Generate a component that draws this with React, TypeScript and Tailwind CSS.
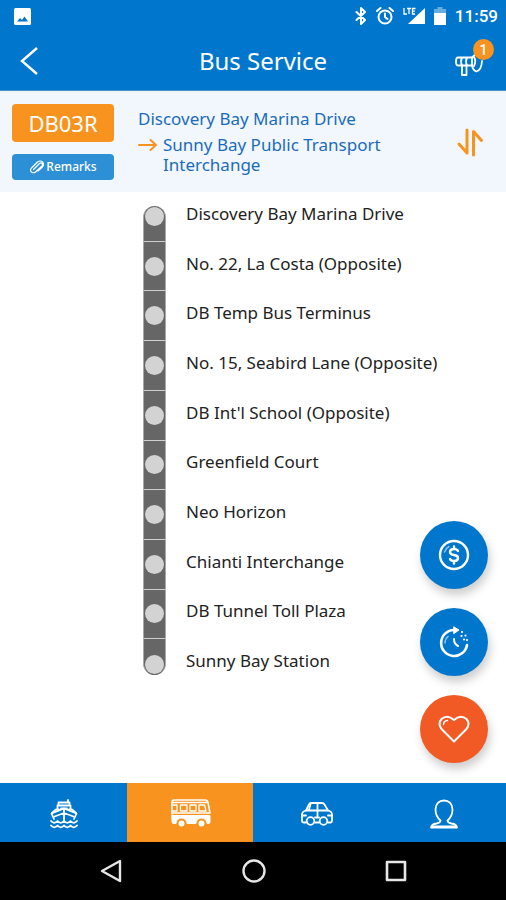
import { useState } from "react";
import type { ReactNode } from "react";
import clsx from "clsx";

const STOPS = [
  "Discovery Bay Marina Drive",
  "No. 22, La Costa (Opposite)",
  "DB Temp Bus Terminus",
  "No. 15, Seabird Lane (Opposite)",
  "DB Int'l School (Opposite)",
  "Greenfield Court",
  "Neo Horizon",
  "Chianti Interchange",
  "DB Tunnel Toll Plaza",
  "Sunny Bay Station",
];

type IconProps = {
  w: number;
  h: number;
  stroke?: number;
  className?: string;
  children: ReactNode;
};

function Icon({ w, h, stroke = 2, className, children }: IconProps) {
  return (
    <svg
      width={w}
      height={h}
      viewBox={`0 0 ${w} ${h}`}
      fill="none"
      stroke="currentColor"
      strokeWidth={stroke}
      strokeLinecap="round"
      strokeLinejoin="round"
      className={clsx("shrink-0", className)}
      aria-hidden="true"
    >
      {children}
    </svg>
  );
}

function FerryIcon() {
  return (
    <Icon w={28} h={30} stroke={1.8}>
      <path d="M8.5 6V3.500h11V6M18 3V1M7.500 12V6.500h13V12M11 9.500h6" />
      <path d="M4 20 1.500 14.500 14 9.500l12.500 5L24 20" />
      <path d="M2 14 6 10.500h3M26 14l-4-3.500h-3M4.500 17.500 14 14l9.500 3.500M14 10v12" />
      <path d="M1 22c2 2.400 4.500 2.400 6.500 0 2 2.400 4.500 2.400 6.500 0 2 2.400 4.500 2.400 6.500 0 2 2.400 4.500 2.400 6.500 0" />
      <path d="M1 26.500c2 2.400 4.500 2.400 6.500 0 2 2.400 4.500 2.400 6.500 0 2 2.400 4.500 2.400 6.500 0 2 2.400 4.500 2.400 6.500 0" />
    </Icon>
  );
}

function BusIcon() {
  return (
    <Icon w={40} h={29} stroke={1.6}>
      <path d="M1 15V3q0-2 2-2h31q2.500 0 3 2.500L39 14M1 3.500h36M1 14h38" />
      <path d="M2 6h4v6H2M9.500 6H16v6H9.500zM19 6h6v6h-6zM28 6h5.500L35 12h-7z" strokeWidth="1.300" />
      <path
        d="M1 16.500h38V23q0 1.500-1.500 1.500H36a5.500 5.500 0 0 0-11 0H16a5.500 5.500 0 0 0-11 0H2.500Q1 24.500 1 23Z"
        fill="currentColor"
        strokeWidth="1"
      />
      <circle cx="10.500" cy="24.500" r="2.200" fill="currentColor" />
      <circle cx="30.500" cy="24.500" r="2.200" fill="currentColor" />
    </Icon>
  );
}

function CarIcon() {
  return (
    <Icon w={32} h={24} stroke={1.8}>
      <path d="M5 8.500 8 2.500Q8.500 1 10 1h11q1.500 0 2.500 1.500l3.500 6" />
      <path d="M5 8.500h22q4 1 4 4V19q0 1.500-1.500 1.500H27M5 8.500q-4 1-4 4V19q0 1.500 1.500 1.500H5" />
      <path d="M16.500 1v13M9.500 2 8 8M14 20.500h4M1 13.500h4M31 13.500h-4M14 15.500h4" />
      <circle cx="9.500" cy="19" r="3.800" />
      <circle cx="22.500" cy="19" r="3.800" />
    </Icon>
  );
}

function ProfileIcon() {
  return (
    <Icon w={30} h={30} stroke={1.8}>
      <path d="M11.500 21.500C8.500 19 6.500 15 6.500 10.500 6.500 5 10 1.500 15 1.500s8.500 3.500 8.500 9c0 4.500-2 8.500-5 11 0 2 1.500 2.500 4 3 3.500.500 5 1.500 5.500 4H2c.500-2.500 2-3.500 5.500-4 2.500-.500 4-1 4-3Z" />
      <path d="M3 27.500h24" />
    </Icon>
  );
}

const TABS = [
  { id: "ferry", label: "Ferry", icon: <FerryIcon /> },
  { id: "bus", label: "Bus", icon: <BusIcon /> },
  { id: "car", label: "Car", icon: <CarIcon /> },
  { id: "profile", label: "Profile", icon: <ProfileIcon /> },
];

function StatusBar() {
  return (
    <div className="flex h-8 items-center justify-between pr-2 pl-[14px] text-white">
      <svg width="17" height="17" viewBox="0 0 17 17" aria-hidden="true">
        <rect width="17" height="17" rx="1.500" fill="currentColor" />
        <path d="M3 13.500 6 10l2 2 2.500-3.500L14 13.500Z" fill="#0077cc" />
      </svg>
      <div className="flex items-center gap-[9px]">
        <Icon w={12} h={18} stroke={2}>
          <path d="m1.500 5 8.500 8-4 4V1l4 4-8.500 8" />
        </Icon>
        <Icon w={18} h={18}>
          <circle cx="9" cy="10" r="6.500" />
          <path d="M9 6.500V10l2.500 2M1 4l3.500-3M17 4l-3.500-3" />
        </Icon>
        <svg width="22" height="18" viewBox="0 0 22 18" aria-hidden="true">
          <path d="M22 1v16H5Z" fill="currentColor" />
          <path
            d="M1 1v6h3M4 1.500h4M6 1.500V7M12.500 1.500H9.500V7h2.500M9.500 4.200h2.500"
            fill="none"
            stroke="currentColor"
            strokeWidth="1.300"
          />
        </svg>
        <svg width="12" height="18" viewBox="0 0 12 18" aria-hidden="true">
          <path d="M3.500 0h5v2H12v5H0V2h3.500Z" fill="currentColor" opacity="0.4" />
          <path d="M0 6h12v12H0Z" fill="currentColor" />
        </svg>
        <span className="font-[Roboto] text-[17px] leading-5 font-medium">11:59</span>
      </div>
    </div>
  );
}

function Header() {
  return (
    <header className="grid h-[59px] grid-cols-[1fr_auto_1fr] items-center border-b border-[#4a8fd6] pl-5 text-white">
      <button type="button" aria-label="Back" className="w-5 justify-self-start">
        <Icon w={20} h={28} stroke={2.400}>
          <path d="M17 1 2 14l15 13" strokeLinecap="butt" strokeLinejoin="miter" />
        </Icon>
      </button>
      <h1 className="text-2xl">Bus Service</h1>
      <button type="button" aria-label="Announcements" className="relative mr-3 h-9 w-10 justify-self-end">
        <Icon w={30} h={26} stroke={1.800} className="mt-2">
          <path d="M4 5.500h14v8H4q-2 0-2-4t2-4ZM8 5.500q-2 4 0 8M13 5.500q-2 4 0 8" />
          <path d="M8 13.500V23h4.500v-9.500" />
          <path d="M18 5.500 23 1M18 13.500q1 5 4.500 6 5-1.500 5.500-10.500M20 5q2.500 4 0 9" />
        </Icon>
        <span className="absolute -top-1 right-0 flex size-[21px] items-center justify-center rounded-full bg-[#f7931e] font-[Roboto] text-sm font-medium">
          1
        </span>
      </button>
    </header>
  );
}

function RouteSummary() {
  return (
    <section className="flex h-[101px] items-start bg-[#f2f7fd] pr-5 pl-3 text-[#1b6cba]">
      <div className="mt-[13px] flex w-[102px] shrink-0 flex-col gap-3">
        <div className="flex h-[38px] items-center justify-center rounded-sm bg-[#f7931e] text-[22px] text-white">
          DB03R
        </div>
        <button
          type="button"
          className="flex h-[26px] items-center justify-center gap-px rounded-sm bg-[#2d8fd5] text-xs font-medium text-white"
        >
          <Icon w={16} h={14} stroke={1.200}>
            <path d="m4.500 9.500 6-6q1.500-1.200 2.500 0t0 2.500l-6.500 6q-2 1.500-4 0t0-4L8.500 2q3-2 5 0t0 5L9 11" />
          </Icon>
          Remarks
        </button>
      </div>
      <div className="mt-[18px] ml-6 flex flex-1 flex-col gap-[6px] text-[17px] leading-5">
        <p>Discovery Bay Marina Drive</p>
        <div className="flex gap-[6px]">
          <Icon w={19} h={20} className="text-[#f7931e]">
            <path d="M1 10h17M12.500 5l5.500 5-5.500 5" />
          </Icon>
          <p className="w-[230px]">Sunny Bay Public Transport Interchange</p>
        </div>
      </div>
      <button type="button" aria-label="Reverse direction" className="mt-9 text-[#f7931e]">
        <Icon w={32} h={30} stroke={3}>
          <path d="M13 3v23L5 17M19.500 28V4.500l8 9" />
        </Icon>
      </button>
    </section>
  );
}

function StopList() {
  return (
    <ol className="grid flex-1 auto-rows-fr">
      {STOPS.map((stop, i) => {
        const first = i === 0;
        const last = i === STOPS.length - 1;
        return (
          <li key={stop} className="flex gap-5 pl-[143px]">
            <div className={clsx("flex w-[23px] shrink-0", first && "pt-[14px]", last && "pb-[14px]")}>
              <div
                className={clsx(
                  "flex flex-1 justify-center border-x border-[#a8a8a8] bg-[#666]",
                  first && "items-start rounded-t-full pt-px",
                  last && "items-end rounded-b-full pb-px",
                  !first && !last && "items-center",
                  !last && "border-b border-b-[#d0d0d0]",
                )}
              >
                <span className="size-[19px] rounded-full bg-[#d3d3d3]" />
              </div>
            </div>
            <span className="self-center pb-[6px] text-[17px] leading-5 text-[#222]">{stop}</span>
          </li>
        );
      })}
    </ol>
  );
}

function FloatingActions() {
  const [saved, setSaved] = useState(false);
  const base = "flex size-[68px] items-center justify-center rounded-full text-white shadow-[2px_6px_10px_rgba(0,0,0,0.2)]";
  return (
    <div className="absolute right-[18px] bottom-5 flex flex-col gap-[19px]">
      <button type="button" aria-label="Fares" className={clsx(base, "bg-[#0077cc]")}>
        <Icon w={32} h={32}>
          <circle cx="16" cy="16" r="14" strokeWidth="2.400" />
          <path d="M6.500 13q1-3.500 4.500-5.500" stroke="#8cc4ef" strokeWidth="1.500" />
          <path d="M20 12q-1-2-4-2-4 0-4 3 0 2.500 4 3t4 3q0 3-4 3-3 0-4-2M16 7.500V10M16 22v2.500" strokeWidth="2.400" />
        </Icon>
      </button>
      <button type="button" aria-label="Timetable" className={clsx(base, "bg-[#0077cc]")}>
        <Icon w={32} h={32}>
          <path d="M16 4A13 13 0 1 0 29 19" strokeWidth="2.600" />
          <path d="m16 1 5 3-5 3.500Z" fill="currentColor" strokeWidth="1" />
          <path d="M24 6v.010M27.500 9.500v.010M29 14v.010M23.500 10v.010M26 13.500v.010" strokeWidth="2.200" />
          <path d="M16 13q0 5 4 7" />
          <path d="M7 17q0-4 3-6.500" stroke="#8cc4ef" strokeWidth="1.500" />
        </Icon>
      </button>
      <button
        type="button"
        aria-label="Favourite"
        aria-pressed={saved}
        onClick={() => setSaved(!saved)}
        className={clsx(base, "bg-[#f15a24]")}
      >
        <Icon w={32} h={28}>
          <path
            d="M16 26.500 3.500 14Q-.500 8.500 3.500 4 9.500-1 16 5q6.500-6 12.500-1 4 4.500 0 10Z"
            fill={saved ? "currentColor" : "none"}
          />
          <path d="M5.500 9.500q0-3.500 4-4" strokeWidth="1.500" />
        </Icon>
      </button>
    </div>
  );
}

function TabBar() {
  const [active, setActive] = useState("bus");
  return (
    <nav className="grid h-[59px] grid-cols-4 text-white">
      {TABS.map((tab) => (
        <button
          key={tab.id}
          type="button"
          aria-label={tab.label}
          aria-current={active === tab.id ? "page" : undefined}
          onClick={() => setActive(tab.id)}
          className={clsx(
            "flex items-center justify-center pt-0.5 pl-0.5",
            active === tab.id ? "bg-[#f7931e]" : "bg-[#0077cc]",
          )}
        >
          {tab.icon}
        </button>
      ))}
    </nav>
  );
}

function SystemNav() {
  return (
    <div className="flex h-[58px] items-center justify-center gap-[118px] bg-black pl-0.5 text-[#e6e6e6]">
      <button type="button" aria-label="System back">
        <Icon w={24} h={24} stroke={2.400}>
          <path d="M20 2v20L2 12Z" />
        </Icon>
      </button>
      <button type="button" aria-label="Home">
        <Icon w={24} h={24} stroke={2.400}>
          <circle cx="12" cy="12" r="10.500" />
        </Icon>
      </button>
      <button type="button" aria-label="Recent apps">
        <Icon w={24} h={24} stroke={2.600}>
          <path d="M3 3h18v18H3Z" />
        </Icon>
      </button>
    </div>
  );
}

export default function App() {
  return (
    <div className="flex min-h-screen flex-col bg-white font-['Noto_Sans',sans-serif]">
      <div className="bg-[#0077cc]">
        <StatusBar />
        <Header />
      </div>
      <RouteSummary />
      <main className="relative flex flex-1 flex-col pb-[94px]">
        <StopList />
        <FloatingActions />
      </main>
      <TabBar />
      <SystemNav />
    </div>
  );
}
